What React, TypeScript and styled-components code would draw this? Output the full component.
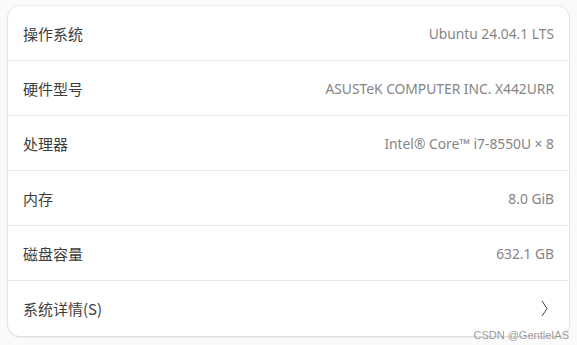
import styled, { createGlobalStyle } from 'styled-components';

const Global = createGlobalStyle`
  html, body {
    margin: 0;
    padding: 0;
    background: #fafafa;
  }
  body {
    width: 577px;
    height: 345px;
    overflow: hidden;
    font-family: "Noto Sans", "Noto Sans CJK SC", sans-serif;
  }
`;

const Page = styled.div`
  position: relative;
  padding: 6px 8px 0 8px;
  height: 345px;
  box-sizing: border-box;
`;

const Card = styled.div`
  background: #ffffff;
  border-radius: 12px;
  box-shadow: 0 0 0 1px rgba(0, 0, 0, 0.05), 0 1px 3px rgba(0, 0, 0, 0.1);
  overflow: hidden;
`;

const Row = styled.div<{ $last?: boolean }>`
  display: flex;
  align-items: center;
  justify-content: space-between;
  height: 55px;
  padding: 0 15px;
  box-sizing: border-box;
  border-bottom: ${(p) => (p.$last ? 'none' : '1px solid #e9e9e9')};
`;

const Label = styled.span`
  font-family: "Noto Sans CJK SC", "Noto Sans", sans-serif;
  font-size: 15px;
  color: #3e3e3e;
`;

const Value = styled.span`
  font-family: "Noto Sans", "Noto Sans CJK SC", sans-serif;
  font-size: 13.8px;
  color: #858585;
`;

const Chevron = styled.svg`
  width: 7px;
  height: 17px;
  margin-right: 6px;
`;

const Watermark = styled.span`
  position: absolute;
  right: 8px;
  bottom: 4px;
  font-family: "Liberation Sans", sans-serif;
  font-size: 11px;
  color: rgba(120, 120, 120, 0.75);
`;

const rows = [
  { label: '操作系统', value: 'Ubuntu 24.04.1 LTS' },
  { label: '硬件型号', value: 'ASUSTeK COMPUTER INC. X442URR' },
  { label: '处理器', value: 'Intel® Core™ i7-8550U × 8' },
  { label: '内存', value: '8.0 GiB' },
  { label: '磁盘容量', value: '632.1 GB' },
];

export default function App() {
  return (
    <>
      <Global />
      <Page>
        <Card>
          {rows.map((r) => (
            <Row key={r.label}>
              <Label>{r.label}</Label>
              <Value>{r.value}</Value>
            </Row>
          ))}
          <Row $last>
            <Label>系统详情(S)</Label>
            <Chevron viewBox="0 0 7 17">
              <path d="M1 1 L6 8.5 L1 16" fill="none" stroke="#444" strokeWidth="1" />
            </Chevron>
          </Row>
        </Card>
        <Watermark>CSDN @GentleIAS</Watermark>
      </Page>
    </>
  );
}
